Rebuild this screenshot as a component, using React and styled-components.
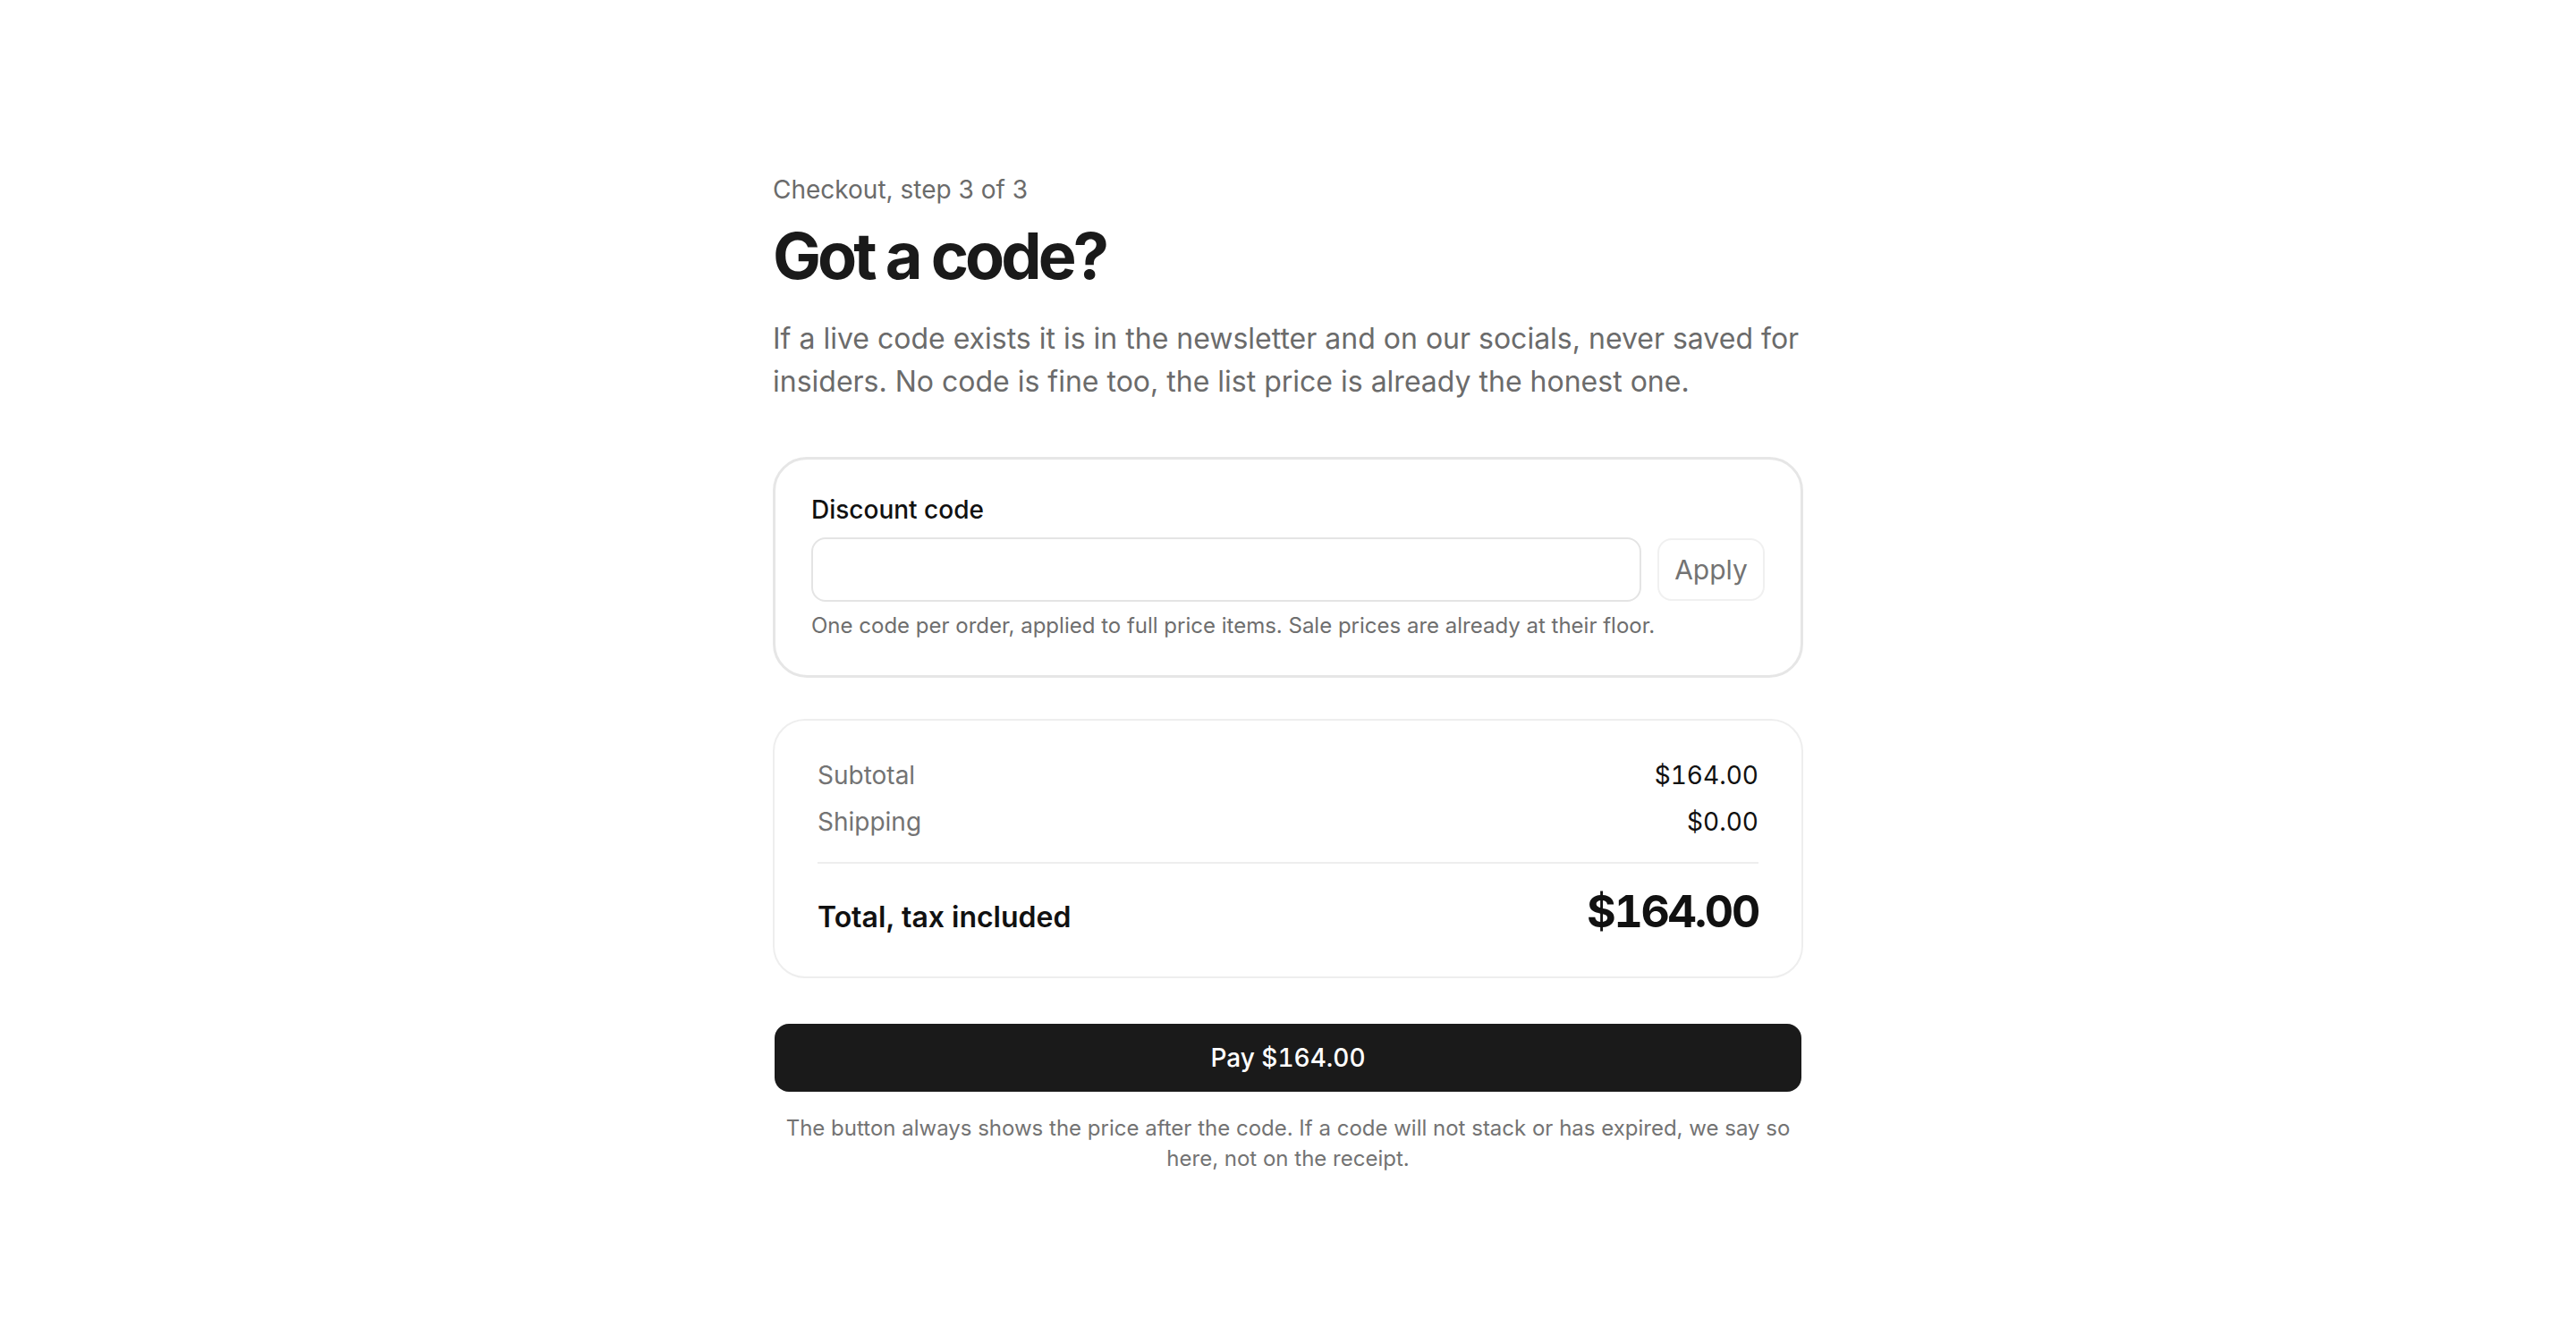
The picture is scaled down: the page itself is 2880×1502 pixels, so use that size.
import React from "react";
import styled, { createGlobalStyle } from "styled-components";

const Global = createGlobalStyle`
  * { box-sizing: border-box; }
  html, body { margin: 0; padding: 0; background: #ffffff; }
  body {
    font-family: Inter, "Noto Sans", "Liberation Sans", sans-serif;
    color: #1a1a1a;
    -webkit-font-smoothing: antialiased;
  }
`;

const Page = styled.main`
  display: flex;
  justify-content: center;
  padding: 191px 0 160px;
`;

const Column = styled.div`
  width: 1152px;
  display: flex;
  flex-direction: column;
`;

const Eyebrow = styled.div`
  font-size: 28px;
  line-height: 42px;
  color: #6b6b6b;
`;

const Title = styled.h1`
  margin: 10px 0 0;
  font-size: 72px;
  line-height: 86px;
  font-weight: 700;
  letter-spacing: -0.055em;
  color: #1a1a1a;
`;

const Lead = styled.p`
  margin: 26px 0 0;
  font-size: 32px;
  line-height: 48px;
  color: #6b6b6b;
`;

const CodeCard = styled.section`
  margin-top: 60px;
  border: 3px solid #e6e6e6;
  border-radius: 38px;
  padding: 35px 40px 38px;
  display: flex;
  flex-direction: column;
`;

const Label = styled.label`
  font-size: 28px;
  line-height: 42px;
  font-weight: 500;
  color: #111111;
`;

const InputRow = styled.div`
  margin-top: 10px;
  display: flex;
  gap: 18px;
  align-items: center;
`;

const CodeInput = styled.input`
  flex: 1;
  height: 72px;
  border: 2px solid #e4e4e4;
  border-radius: 16px;
  padding: 0 22px;
  font-family: inherit;
  font-size: 28px;
  outline: none;
  background: #fff;
`;

const ApplyButton = styled.button`
  width: 120px;
  height: 70px;
  border: 2px solid #f0f0f0;
  border-radius: 16px;
  background: #fff;
  font-family: inherit;
  font-size: 30px;
  color: #737373;
  cursor: pointer;
`;

const Helper = styled.div`
  margin-top: 10px;
  font-size: 24px;
  line-height: 34px;
  color: #6e6e6e;
`;

const SummaryCard = styled.section`
  margin-top: 46px;
  border: 2px solid #eeeeee;
  border-radius: 36px;
  padding: 40px 48px 42px;
  display: flex;
  flex-direction: column;
`;

const Row = styled.div`
  display: flex;
  justify-content: space-between;
  align-items: baseline;
  font-size: 28px;
  line-height: 42px;
  & + & { margin-top: 10px; }
`;

const RowLabel = styled.span`
  color: #737373;
`;

const RowValue = styled.span`
  color: #111111;
  font-variant-numeric: tabular-nums;
`;

const Divider = styled.hr`
  margin: 24px 0 0;
  border: 0;
  height: 2px;
  background: #eeeeee;
`;

const TotalRow = styled.div`
  margin-top: 22px;
  display: flex;
  justify-content: space-between;
  align-items: baseline;
`;

const TotalLabel = styled.span`
  font-size: 32px;
  line-height: 48px;
  font-weight: 600;
  color: #111111;
`;

const TotalValue = styled.span`
  font-size: 50px;
  line-height: 62px;
  font-weight: 700;
  letter-spacing: -0.045em;
  font-variant-numeric: tabular-nums;
  color: #111111;
`;

const PayButton = styled.button`
  margin: 51px 2px 0;
  height: 76px;
  border: 0;
  border-radius: 16px;
  background: #1a1a1a;
  color: #ffffff;
  font-family: inherit;
  font-variant-numeric: tabular-nums;
  font-size: 28px;
  font-weight: 500;
  cursor: pointer;
`;

const Footnote = styled.p`
  margin: 24px 0 0;
  padding: 0 12px;
  text-align: center;
  font-size: 24px;
  line-height: 34px;
  color: #737373;
`;

export default function App() {
  return (
    <>
      <Global />
      <Page>
        <Column>
          <Eyebrow>Checkout, step 3 of 3</Eyebrow>
          <Title>Got a code?</Title>
          <Lead>
            If a live code exists it is in the newsletter and on our socials, never saved for
            insiders. No code is fine too, the list price is already the honest one.
          </Lead>

          <CodeCard>
            <Label htmlFor="code">Discount code</Label>
            <InputRow>
              <CodeInput id="code" type="text" />
              <ApplyButton type="button">Apply</ApplyButton>
            </InputRow>
            <Helper>
              One code per order, applied to full price items. Sale prices are already at their floor.
            </Helper>
          </CodeCard>

          <SummaryCard>
            <Row>
              <RowLabel>Subtotal</RowLabel>
              <RowValue>$164.00</RowValue>
            </Row>
            <Row>
              <RowLabel>Shipping</RowLabel>
              <RowValue>$0.00</RowValue>
            </Row>
            <Divider />
            <TotalRow>
              <TotalLabel>Total, tax included</TotalLabel>
              <TotalValue>$164.00</TotalValue>
            </TotalRow>
          </SummaryCard>

          <PayButton type="button">Pay $164.00</PayButton>
          <Footnote>
            The button always shows the price after the code. If a code will not stack or has expired, we say so
            here, not on the receipt.
          </Footnote>
        </Column>
      </Page>
    </>
  );
}
